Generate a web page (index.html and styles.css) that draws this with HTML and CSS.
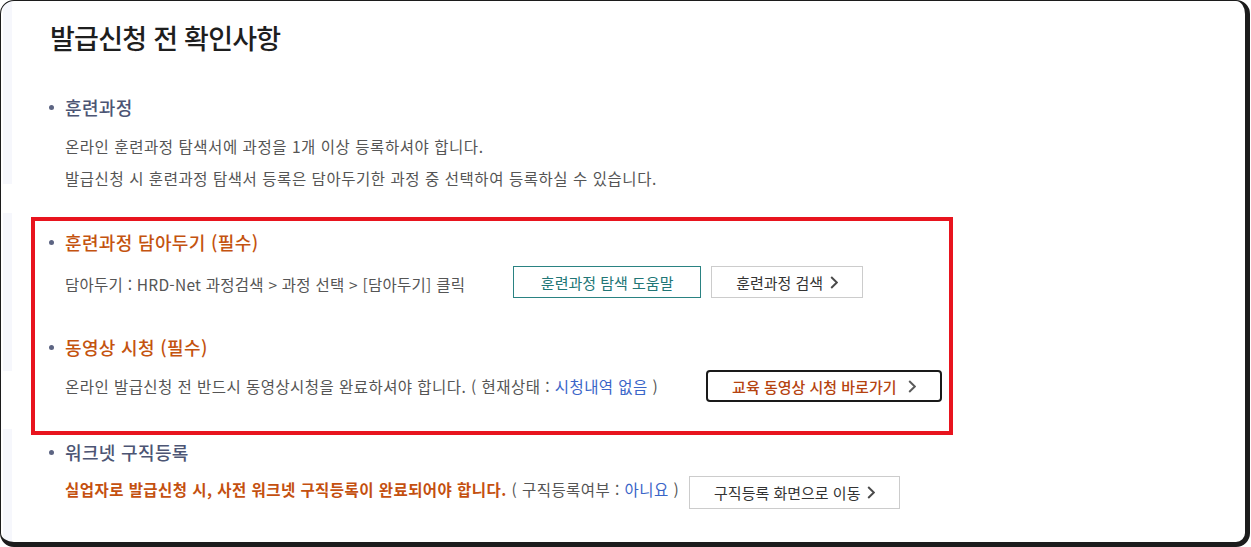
FILE: index.html
```html
<!DOCTYPE html>
<html lang="ko">
<head>
    <meta charset="UTF-8">
    <meta name="viewport" content="width=device-width, initial-scale=1.0">
    <title>발급신청 전 확인사항</title>
    <link rel="stylesheet" href="styles.css">
</head>
<body>

    <div class="card">
        <h1 class="title">발급신청 전 확인사항</h1>

        <div class="content">

            <div class="item">
                <h3 class="item-head">훈련과정</h3>
                <p class="desc">온라인 훈련과정 탐색서에 과정을 1개 이상 등록하셔야 합니다.<br>
                발급신청 시 훈련과정 탐색서 등록은 담아두기한 과정 중 선택하여 등록하실 수 있습니다.</p>
            </div>

            <!-- 필수 항목 박스 -->
            <div class="required-box">
                <div class="item">
                    <h3 class="item-head orange">훈련과정 담아두기 (필수)</h3>
                    <div class="row row-first">
                        <span class="desc desc-tight">담아두기 : HRD-Net 과정검색 &gt; 과정 선택 &gt; [담아두기] 클릭</span>
                        <div class="btns">
                            <button class="btn btn-teal">훈련과정 탐색 도움말</button>
                            <button class="btn btn-gray">훈련과정 검색
                                <svg class="arrow" width="8" height="13" viewBox="0 0 8 13"><polyline points="1.2,1 6.8,6.5 1.2,12" /></svg>
                            </button>
                        </div>
                    </div>
                </div>

                <div class="item item-video">
                    <h3 class="item-head orange">동영상 시청 (필수)</h3>
                    <div class="row">
                        <span class="desc">온라인 발급신청 전 반드시 동영상시청을 완료하셔야 합니다. ( 현재상태 : <em class="blue">시청내역 없음</em> )</span>
                        <div class="btns">
                            <button class="btn btn-dark">교육 동영상 시청 바로가기
                                <svg class="arrow arrow-wide" width="8" height="13" viewBox="0 0 8 13"><polyline points="1.2,1 6.8,6.5 1.2,12" /></svg>
                            </button>
                        </div>
                    </div>
                </div>
            </div>

            <div class="item item-work">
                <h3 class="item-head">워크넷 구직등록</h3>
                <div class="row row-tall">
                    <span class="desc"><strong class="warn">실업자로 발급신청 시, 사전 워크넷 구직등록이 완료되어야 합니다.</strong> ( 구직등록여부 : <em class="blue">아니요</em> )</span>
                    <button class="btn btn-gray btn-near">구직등록 화면으로 이동
                        <svg class="arrow" width="8" height="13" viewBox="0 0 8 13"><polyline points="1.2,1 6.8,6.5 1.2,12" /></svg>
                    </button>
                </div>
            </div>

        </div>
    </div>

</body>
</html>
```

FILE: styles.css
```css
*{
    box-sizing:border-box;
}

body{
    margin:0;
    background-color:#fff;
    font-family:"Noto Sans CJK KR", "Noto Sans", sans-serif;
}

.card{
    width:1250px;
    height:547px;
    border:1px solid #1c1c1c;
    border-right-width:5px;
    border-bottom-width:5px;
    border-radius:14px;
    padding-top:19px;
    /* 왼쪽 옅은 띠 */
    background:
        linear-gradient(#f6f7fc, #f6f7fc) no-repeat 2px 0 / 9px 183px,
        linear-gradient(#f6f7fc, #f6f7fc) no-repeat 2px 212px / 9px 158px,
        linear-gradient(#f6f7fc, #f6f7fc) no-repeat 2px 428px / 9px 120px,
        #fff;
}

.title{
    margin:0 0 0 49px;
    font-size:27px;
    line-height:36px;
    font-weight:500;
    letter-spacing:-0.75px;
    color:#1e1e1e;
}

.content{
    padding-left:30px;
    margin-top:38px;
}

.item{
    padding-left:18px;
}

.item-head{
    margin:0;
    font-size:18px;
    line-height:26px;
    font-weight:500;
    color:#4c5574;
    letter-spacing:0.35px;
}

.item-head::before{
    content:"";
    display:inline-block;
    width:5px;
    height:5px;
    border-radius:50%;
    background-color:#5c6482;
    margin-right:11px;
    vertical-align:5px;
}

.item-head.orange{
    color:#c4530f;
}

.desc{
    font-size:15.5px;
    color:#555;
    letter-spacing:0.45px;
}

.desc-tight{
    letter-spacing:0.25px;
}

p.desc{
    margin:10px 0 0 16px;
    line-height:32px;
    letter-spacing:0.55px;
}

.blue{
    font-style:normal;
    color:#3a65c8;
}

.warn{
    color:#c4500f;
    font-weight:700;
}

.row{
    display:flex;
    align-items:center;
    height:32px;
    margin-top:10px;
    padding-left:16px;
}

.row-first{
    margin-top:11px;
}

.row-first .desc{
    padding-top:3px;
}

.btns{
    display:flex;
    gap:10px;
    margin-left:48px;
}

.required-box{
    width:922px;
    margin-top:23px;
    border:4px solid #e8141e;
    padding:8px 0 29px 14px;
}

.required-box .item{
    padding-left:0;
}

.item-video{
    margin-top:36px;
}

.item-work{
    margin-top:4px;
}

.row-tall{
    height:33px;
    margin-top:11px;
}

.row-tall .desc{
    padding-bottom:8px;
}

.btn{
    display:flex;
    align-items:center;
    justify-content:center;
    height:32px;
    padding:0;
    background-color:#fff;
    font-family:"Noto Sans CJK KR", "Noto Sans", sans-serif;
    font-size:15px;
    cursor:pointer;
}

.btn-teal{
    width:188px;
    border:1px solid #2a8282;
    color:#217676;
}

.btn-gray{
    width:152px;
    border:1px solid #cccccc;
    color:#333;
}

.btn-dark{
    width:236px;
    border:2px solid #1a1a1a;
    border-radius:4px;
    color:#b5430f;
    font-weight:500;
}

.btn-near{
    width:211px;
    height:33px;
    margin-left:10px;
}

.arrow{
    margin-left:7px;
    fill:none;
    stroke:#4a4a4a;
    stroke-width:1.9;
}

.arrow-wide{
    margin-left:12px;
    stroke:#5a5a5a;
}
```
